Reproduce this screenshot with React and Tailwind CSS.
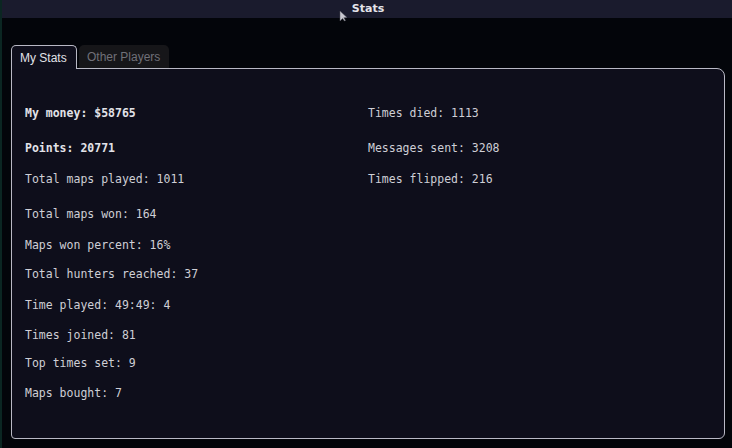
const left = [
  { text: 'My money: $58765', bold: true, mt: 'mt-0' },
  { text: 'Points: 20771', bold: true, mt: 'mt-[21px]' },
  { text: 'Total maps played: 1011', mt: 'mt-[17px]' },
  { text: 'Total maps won: 164', mt: 'mt-[21px]' },
  { text: 'Maps won percent: 16%', mt: 'mt-[17px]' },
  { text: 'Total hunters reached: 37', mt: 'mt-[15px]' },
  { text: 'Time played: 49:49: 4', mt: 'mt-[17px]' },
  { text: 'Times joined: 81', mt: 'mt-[16px]' },
  { text: 'Top times set: 9', mt: 'mt-[14px]' },
  { text: 'Maps bought: 7', mt: 'mt-[16px]' },
];

const right = [
  { text: 'Times died: 1113', mt: 'mt-0' },
  { text: 'Messages sent: 3208', mt: 'mt-[21px]' },
  { text: 'Times flipped: 216', mt: 'mt-[17px]' },
];

function Stat({ text, bold, mt }) {
  return (
    <div
      className={`${mt} h-[14px] leading-[14px] whitespace-pre ${bold ? 'font-bold text-[#e2e2e8]' : 'text-[#cfcfd6]'}`}
    >
      {text}
    </div>
  );
}

export default function App() {
  return (
    <div className="relative w-[732px] h-[448px] overflow-hidden bg-[#03050a] border-l-2 border-[#0b2622] flex flex-col font-['DejaVu_Sans_Mono',monospace] text-[11.5px]">
      {/* title bar */}
      <div className="h-[18px] shrink-0 bg-[#1a1b2d] flex items-center justify-center font-['DejaVu_Sans',sans-serif] text-[11px] font-bold text-[#e4e4ea] pl-[2px]">
        Stats
      </div>
      <svg className="absolute left-[337px] top-[10px]" width="9" height="12" viewBox="0 0 9 12">
        <path d="M1 1 L1 11 L3.5 8.5 L5.5 11 L6.5 10.5 L4.8 7.8 L8 7.5 Z" fill="#c8c8d0" stroke="#55555f" strokeWidth="0.5" />
      </svg>

      <div className="flex-1 pt-[26px] pl-[9px] pr-[7px] pb-[9px] flex flex-col">
        {/* tabs */}
        <div className="flex items-end h-[24px] font-['Liberation_Sans',sans-serif] text-[12px]">
          <div className="h-[24px] w-[66px] bg-[#0f0f1c] border border-b-0 border-[#b9b9c5] rounded-t-[5px] flex items-center pl-[8px] text-[#e2e2e8] relative z-10 -mb-px">
            My Stats
          </div>
          <div className="ml-[2px] h-[23px] w-[90px] bg-[#161619] rounded-t-[5px] flex items-center pl-[8px] text-[#707078]">
            Other Players
          </div>
        </div>

        {/* panel */}
        <div className="flex-1 bg-[#0e0e1b] border border-[#b9b9c5] rounded-tr-[8px] rounded-br-[6px] rounded-bl-[4px] pt-[37px] pl-[13px] grid grid-cols-[343px_1fr]">
          <div className="flex flex-col">
            {left.map((s) => (
              <Stat key={s.text} {...s} />
            ))}
          </div>
          <div className="flex flex-col">
            {right.map((s) => (
              <Stat key={s.text} {...s} />
            ))}
          </div>
        </div>
      </div>
    </div>
  );
}
